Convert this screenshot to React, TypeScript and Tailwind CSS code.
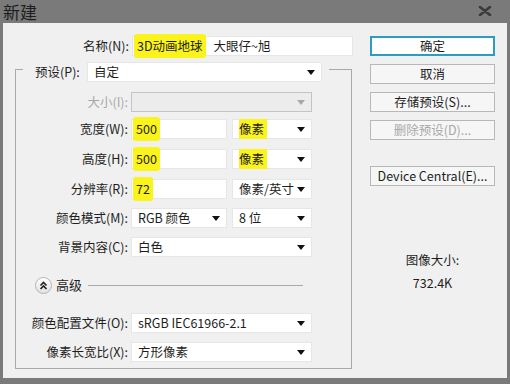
const Arrow = ({ disabled }: { disabled?: boolean }) => (
  <svg width="8" height="5" viewBox="0 0 8 5" className="shrink-0">
    <path d="M0 0h8L4 5z" fill={disabled ? "#a8a8a8" : "#111"} />
  </svg>
);

const Hl = ({ children }: { children: React.ReactNode }) => (
  <span className="bg-[#fbf31c] px-[3px] py-[2px] rounded-[3px] -ml-[3px]">{children}</span>
);

const Select = ({
  w,
  children,
  disabled,
}: {
  w: string;
  children?: React.ReactNode;
  disabled?: boolean;
}) => (
  <div
    className={`${w} h-[20px] flex items-center justify-between pl-[6px] pr-[6px] border ${
      disabled ? "bg-[#ececec] border-[#c4c4c4]" : "bg-white border-[#e6e6e6]"
    }`}
  >
    <span className="truncate">{children}</span>
    <Arrow disabled={disabled} />
  </div>
);

const Input = ({ w, children }: { w: string; children?: React.ReactNode }) => (
  <div className={`${w} h-[20px] flex items-center pl-[4px] bg-white border border-[#e6e6e6]`}>
    {children}
  </div>
);

const Row = ({
  label,
  mt,
  disabled,
  children,
}: {
  label: string;
  mt: string;
  disabled?: boolean;
  children: React.ReactNode;
}) => (
  <div className={`flex items-center h-[20px] ${mt}`}>
    <div className={`w-[112px] text-right whitespace-nowrap ${disabled ? "text-[#a8a8a8]" : ""}`}>{label}</div>
    <div className="ml-[3px] flex gap-[5px]">{children}</div>
  </div>
);

const Button = ({
  children,
  primary,
  disabled,
  mt,
}: {
  children: React.ReactNode;
  primary?: boolean;
  disabled?: boolean;
  mt?: string;
}) => (
  <div
    className={`h-[20px] w-[125px] flex items-center justify-center ${mt ?? ""} ${
      primary ? "border-2 border-[#2a9dc3] bg-white" : "border border-[#b8b8b8] bg-[#f6f6f6]"
    } ${disabled ? "text-[#a8a8a8]" : ""}`}
  >
    {children}
  </div>
);

export default function App() {
  return (
    <div className="w-[510px] h-[384px] bg-[#7a7a7a] overflow-hidden font-['Noto_Sans_CJK_SC','Noto_Sans',sans-serif] text-[12.5px] text-[#1e1e1e] leading-[20px]">
      {/* TITLE BAR */}
      <div className="h-[23px] flex items-center justify-between">
        <span className="pl-[3px] text-[17px] leading-[23px] text-[#1e1e1e]">新建</span>
        <svg width="14" height="10" viewBox="0 0 14 10" className="mr-[18px] -mt-[2px]">
          <path d="M2 1l10 8M12 1L2 9" stroke="#3a3a3a" strokeWidth="2.6" strokeLinecap="round" />
        </svg>
      </div>

      {/* BODY */}
      <div className="ml-[3px] w-[504px] h-[355px] bg-[#f0f0f0] flex">
        {/* LEFT */}
        <div className="w-[350px] pl-[12px] shrink-0">
          <div className="flex items-center h-[20px] mt-[13px]">
            <div className="w-[114px] text-right">名称(N):</div>
            <div className="ml-[3px] w-[221px] h-[20px] flex items-center pl-[4px] bg-white border border-[#e6e6e6] whitespace-nowrap">
              <Hl>3D动画地球</Hl>
              <span className="ml-[8px]">大眼仔~旭</span>
            </div>
          </div>

          <fieldset className="w-[337px] border border-[#a9a9a9] pb-[6px]">
            <legend className="ml-[7px] pt-[6px] pl-[12px] pr-[7px] flex items-center">
              <span className="w-[52px] whitespace-nowrap">预设(P):</span>
              <Select w="w-[235px]">自定</Select>
            </legend>

            <Row label="大小(I):" mt="mt-[10px]" disabled>
              <Select w="w-[181px]" disabled />
            </Row>
            <Row label="宽度(W):" mt="mt-[7px]">
              <Input w="w-[96px]">
                <Hl>500</Hl>
              </Input>
              <Select w="w-[80px]">
                <Hl>像素</Hl>
              </Select>
            </Row>
            <Row label="高度(H):" mt="mt-[10px]">
              <Input w="w-[96px]">
                <Hl>500</Hl>
              </Input>
              <Select w="w-[80px]">
                <Hl>像素</Hl>
              </Select>
            </Row>
            <Row label="分辨率(R):" mt="mt-[10px]">
              <Input w="w-[96px]">
                <Hl>72</Hl>
              </Input>
              <Select w="w-[80px]">像素/英寸</Select>
            </Row>
            <Row label="颜色模式(M):" mt="mt-[9px]">
              <Select w="w-[96px]">RGB 颜色</Select>
              <Select w="w-[80px]">8 位</Select>
            </Row>
            <Row label="背景内容(C):" mt="mt-[9px]">
              <Select w="w-[181px]">白色</Select>
            </Row>

            {/* ADVANCED */}
            <div className="flex items-center h-[16px] mt-[20px] pl-[19px] pr-[48px]">
              <div className="w-[17px] h-[17px] rounded-full border border-[#b4b4b4] bg-gradient-to-b from-white to-[#e2e2e2] flex items-center justify-center shrink-0">
                <svg width="9" height="9" viewBox="0 0 9 9">
                  <path d="M1.5 4.5L4.5 1.5L7.5 4.5M1.5 8L4.5 5L7.5 8" fill="none" stroke="#222" strokeWidth="1.6" />
                </svg>
              </div>
              <span className="ml-[4px] text-[13px]">高级</span>
              <div className="flex-1 ml-[6px] h-px bg-[#a9a9a9]" />
            </div>

            <Row label="颜色配置文件(O):" mt="mt-[20px]">
              <Select w="w-[181px]">sRGB IEC61966-2.1</Select>
            </Row>
            <Row label="像素长宽比(X):" mt="mt-[9px]">
              <Select w="w-[181px]">方形像素</Select>
            </Row>
          </fieldset>
        </div>

        {/* RIGHT */}
        <div className="ml-[17px] w-[125px] pt-[13px] flex flex-col">
          <Button primary>确定</Button>
          <Button mt="mt-[8px]">取消</Button>
          <Button mt="mt-[8px]">存储预设(S)...</Button>
          <Button mt="mt-[8px]" disabled>
            删除预设(D)...
          </Button>
          <Button mt="mt-[26px]">Device Central(E)...</Button>
          <div className="mt-[64px] text-center">图像大小:</div>
          <div className="mt-[3px] text-center">732.4K</div>
        </div>
      </div>
    </div>
  );
}
